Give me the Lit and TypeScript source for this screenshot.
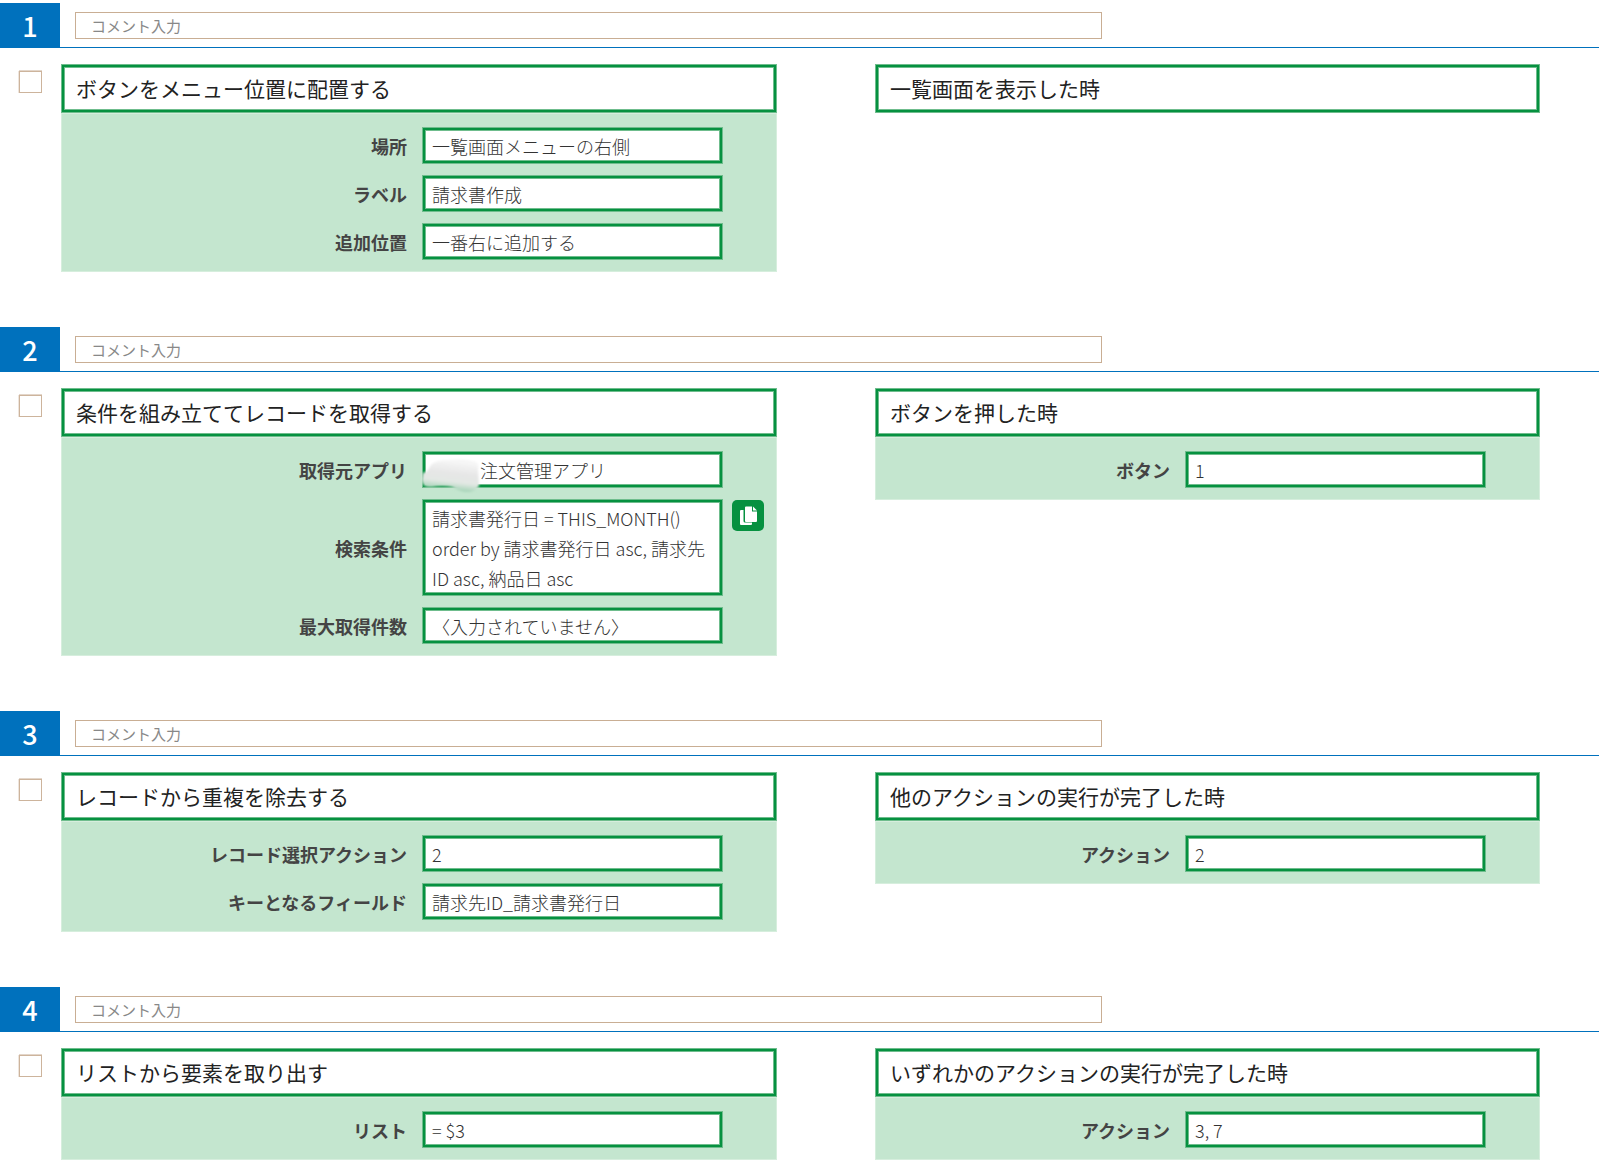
import { LitElement, html, css, svg, nothing } from "lit";
import { customElement, property } from "lit/decorators.js";

interface Field {
  label: string;
  value: string;
  copy?: boolean;
  masked?: boolean;
}

interface Card {
  title: string;
  fields: Field[];
}

interface Step {
  no: number;
  action: Card;
  trigger: Card;
}

const STEPS: Step[] = [
  {
    no: 1,
    action: {
      title: "ボタンをメニュー位置に配置する",
      fields: [
        { label: "場所", value: "一覧画面メニューの右側" },
        { label: "ラベル", value: "請求書作成" },
        { label: "追加位置", value: "一番右に追加する" },
      ],
    },
    trigger: { title: "一覧画面を表示した時", fields: [] },
  },
  {
    no: 2,
    action: {
      title: "条件を組み立ててレコードを取得する",
      fields: [
        { label: "取得元アプリ", value: "注文管理アプリ", masked: true },
        {
          label: "検索条件",
          value: "請求書発行日 = THIS_MONTH() order by 請求書発行日 asc, 請求先ID asc, 納品日 asc",
          copy: true,
        },
        { label: "最大取得件数", value: "〈入力されていません〉" },
      ],
    },
    trigger: { title: "ボタンを押した時", fields: [{ label: "ボタン", value: "1" }] },
  },
  {
    no: 3,
    action: {
      title: "レコードから重複を除去する",
      fields: [
        { label: "レコード選択アクション", value: "2" },
        { label: "キーとなるフィールド", value: "請求先ID_請求書発行日" },
      ],
    },
    trigger: {
      title: "他のアクションの実行が完了した時",
      fields: [{ label: "アクション", value: "2" }],
    },
  },
  {
    no: 4,
    action: { title: "リストから要素を取り出す", fields: [{ label: "リスト", value: "= $3" }] },
    trigger: {
      title: "いずれかのアクションの実行が完了した時",
      fields: [{ label: "アクション", value: "3, 7" }],
    },
  },
];

const copyIcon = svg`
  <path d="M1 4h2.500v11q0 1.500 1.500 1.500h7V18q0 1-1 1H1q-1 0-1-1V5q0-1 1-1z" />
  <path d="M6 .5h6v5h5V15q0 1-1 1H6q-1 0-1-1V1.500q0-1 1-1z" />
  <path d="M13 .5l4 4H13z" />`;

@customElement("step-card")
export class StepCard extends LitElement {
  @property({ attribute: false }) card!: Card;

  static styles = css`
    :host {
      display: block;
      min-width: 0;
    }
    button {
      font: inherit;
      color: inherit;
      margin: 0;
      cursor: pointer;
    }
    .frame {
      display: block;
      box-sizing: border-box;
      background: #fff;
      border: 3px solid #069140;
      outline: 1px solid #6fbd8d;
      outline-offset: -1px;
      box-shadow: inset 0 0 0 1px #6fbd8d;
      text-align: left;
    }
    .title {
      width: 100%;
      padding: 1px 12px 2px;
      font-size: 21px;
      line-height: 40px;
      color: #222;
    }
    .panel {
      background: #c4e6cf;
      box-shadow: inset 0 0 0 1px #d6eedd;
      padding: 14px 0 12px;
      display: flex;
      flex-direction: column;
      gap: 11px;
    }
    .row {
      display: grid;
      grid-template-columns: minmax(0, 1fr) 301px 54px;
      align-items: center;
    }
    label {
      padding-right: 15px;
      text-align: right;
      font-size: 18px;
      line-height: 30px;
      font-weight: 700;
      color: #444;
    }
    .value {
      position: relative;
      width: 100%;
      padding: 1px 7px 0;
      font-size: 18px;
      line-height: 30px;
      font-weight: 300;
      color: #333;
    }
    .masked {
      padding-left: 55px;
    }
    .smudge {
      position: absolute;
      left: -3px;
      top: 4px;
      width: 58px;
      height: 34px;
      overflow: visible;
    }
    .copy {
      align-self: start;
      margin: 1px 0 0 9px;
      width: 32px;
      height: 31px;
      padding: 0;
      border: 0;
      border-radius: 5px;
      background: #069140;
      display: grid;
      place-items: center;
    }
    .copy svg {
      width: 17px;
      height: 20px;
      fill: #fff;
    }
  `;

  private row(f: Field, i: number) {
    return html`
      <div class="row">
        <label for="f${i}">${f.label}</label>
        <button id="f${i}" type="button" class="frame value ${f.masked ? "masked" : ""}">${f.masked
          ? html`<svg class="smudge" viewBox="0 0 58 34" aria-hidden="true">
              <defs>
                <linearGradient id="g" x1="0.2" y1="0" x2="0" y2="1">
                  <stop offset="0" stop-color="#f6f6f6" />
                  <stop offset="0.35" stop-color="#e6e6e6" />
                  <stop offset="0.6" stop-color="#e3e8e4" />
                  <stop offset="1" stop-color="#7cc799" />
                </linearGradient>
                <filter id="b"><feGaussianBlur stdDeviation="1" /></filter>
              </defs>
              <path
                d="M1 14Q4 17 9 7Q14 2 26 2Q42 0 54 4Q57 5 56 12L57 28Q53 34 46 34Q38 34 30 29Q20 27 10 29Q0 30 0 22z"
                fill="url(#g)"
                filter="url(#b)"
              />
            </svg>`
          : nothing}${f.value}</button>
        ${f.copy
          ? html`<button class="copy" type="button" aria-label="コピー">
              <svg viewBox="0 0 17 20" aria-hidden="true">${copyIcon}</svg>
            </button>`
          : nothing}
      </div>
    `;
  }

  render() {
    const { title, fields } = this.card;
    return html`
      <button type="button" class="frame title">${title}</button>
      ${fields.length
        ? html`<div class="panel">${fields.map((f, i) => this.row(f, i))}</div>`
        : nothing}
    `;
  }
}

@customElement("app-root")
export class AppRoot extends LitElement {
  static styles = css`
    :host {
      display: flex;
      flex-direction: column;
      gap: 55px;
      padding: 3px 0 4px;
      background: #fff;
      font-family: "Noto Sans CJK JP", "Noto Sans", sans-serif;
    }
    .head {
      display: flex;
      align-items: stretch;
      height: 44px;
      border-bottom: 1px solid #0071bd;
    }
    .no {
      width: 60px;
      flex: none;
      margin-bottom: -1px;
      background: #0071bd;
      color: #fff;
      font-size: 27px;
      line-height: 45px;
      font-weight: 500;
      text-align: center;
    }
    .comment {
      flex: 1;
      padding: 9px 0 0 15px;
    }
    .comment input {
      box-sizing: border-box;
      display: block;
      width: 67.4%;
      height: 27px;
      padding: 0 15px;
      border: 1px solid #c9ae94;
      border-radius: 0;
      outline: none;
      font: 15px/25px "Noto Sans CJK JP", "Noto Sans", sans-serif;
    }
    .comment input::placeholder {
      color: #888;
      opacity: 1;
    }
    .body {
      display: grid;
      grid-template-columns: 61px minmax(0, 716fr) 98px minmax(0, 665fr) 59px;
      align-items: start;
      padding-top: 16px;
    }
    .check {
      appearance: none;
      box-sizing: border-box;
      width: 23px;
      height: 22px;
      margin: 7px 0 0 19px;
      border: 1px solid #cdb49c;
      box-shadow: 0 -1px 0 #e3d6ca, -1px 0 0 #eee5dd;
      background: #fff;
    }
    .trigger {
      grid-column: 4;
    }
  `;

  render() {
    return STEPS.map(
      (s) => html`
        <section>
          <div class="head">
            <div class="no">${s.no}</div>
            <div class="comment">
              <input type="text" placeholder="コメント入力" aria-label="コメント入力" />
            </div>
          </div>
          <div class="body">
            <input class="check" type="checkbox" aria-label=${`${s.no}`} />
            <step-card .card=${s.action}></step-card>
            <step-card class="trigger" .card=${s.trigger}></step-card>
          </div>
        </section>
      `
    );
  }
}
